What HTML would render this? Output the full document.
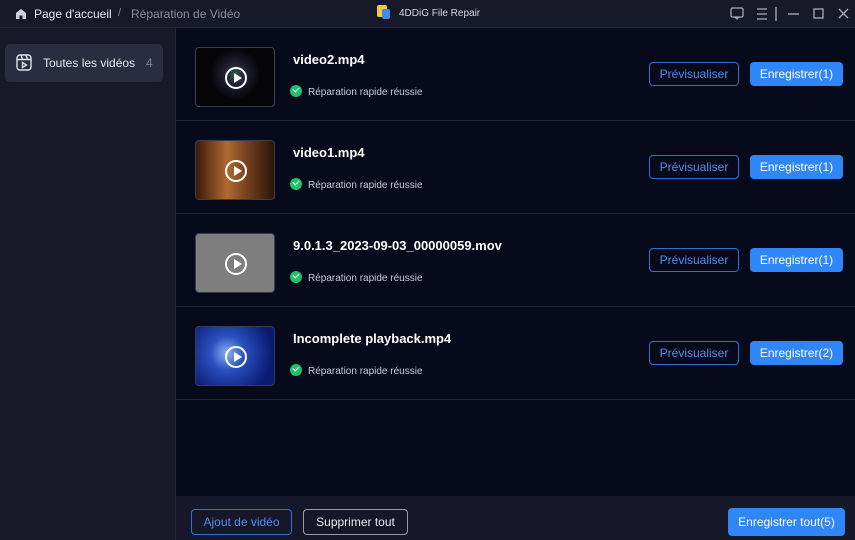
<!DOCTYPE html>
<html><head><meta charset="utf-8"><style>
*{margin:0;padding:0;box-sizing:border-box}
body{width:855px;height:540px;background:#070a1a;font-family:"Liberation Sans",sans-serif;position:relative;overflow:hidden;color:#fff}
.top{position:absolute;left:0;top:0;width:855px;height:28px;background:#171929;border-bottom:1px solid #23263a}
.side{position:absolute;left:0;top:28px;width:176px;height:512px;background:#171929;border-right:1px solid #20233a}
.item{position:absolute;left:5px;top:16px;width:158px;height:38px;background:#2a2c3f;border-radius:5px}
.row{position:absolute;left:176px;width:679px;height:93px;border-bottom:1px solid #23263a}
.thumb{position:absolute;left:19px;top:19px;width:80px;height:60px;border-radius:4px;border:1px solid #3a3d50;overflow:hidden}
.play{position:absolute;left:29px;top:19px;width:22px;height:22px;border:2px solid #fff;border-radius:50%}
.play:after{content:"";position:absolute;left:7px;top:4px;border-left:8px solid #fff;border-top:5px solid transparent;border-bottom:5px solid transparent}
.name{position:absolute;left:117px;top:24px;font-size:13px;font-weight:bold}
.ok{position:absolute;left:114px;top:57px;font-size:10px;color:#c8cad4}
.ok i{display:inline-block;width:12px;height:12px;border-radius:50%;background:#22c06b;vertical-align:-2px;margin-right:6px;position:relative}
.ok i:after{content:"";position:absolute;left:3px;top:2px;width:5px;height:3px;border-left:1.5px solid #fff;border-bottom:1.5px solid #fff;transform:rotate(-45deg)}
.b1{position:absolute;left:473px;top:34px;width:90px;height:24px;border:1px solid #2f6fd6;border-radius:4px;color:#4d8ff0;font-size:12px;text-align:center;line-height:22px}
.b2{position:absolute;left:574px;top:34px;width:93px;height:24px;background:#2f86f6;border-radius:4px;color:#fff;font-size:12px;text-align:center;line-height:24px}
.foot{position:absolute;left:176px;top:496px;width:679px;height:44px;background:#161829}
</style></head><body>
<div class="top">
<svg style="position:absolute;left:15px;top:8px" width="12" height="12" viewBox="0 0 12 12"><path d="M1 5L6 1L11 5V11H7.5V7.5H4.5V11H1Z" fill="#d0d2da"/></svg>
<span style="position:absolute;left:34px;top:7px;font-size:12px;color:#e8e9ee">Page d'accueil</span>
<span style="position:absolute;left:118px;top:7px;font-size:11px;color:#888">/</span>
<span style="position:absolute;left:131px;top:7px;font-size:12px;color:#8a8d9c">Réparation de Vidéo</span>
<div style="position:absolute;left:377px;top:5px;width:10px;height:12px;background:#f5c542;border-radius:2px"></div>
<div style="position:absolute;left:382px;top:9px;width:8px;height:10px;background:#3b8df5;border-radius:2px"></div>
<span style="position:absolute;left:399px;top:8px;font-size:10px;color:#d8d9e0">4DDiG File Repair</span>
<svg style="position:absolute;left:730px;top:7px" width="120" height="14" viewBox="0 0 120 14" stroke="#a8abb8" fill="none" stroke-width="1.3"><rect x="1" y="1" width="12" height="9" rx="1.5"/><path d="M5 10l2 2 2-2"/><path d="M27 2h10M27 7h10M27 12h10"/><path d="M46 0v14"/><path d="M58 7h11"/><rect x="84" y="2" width="9" height="9"/><path d="M109 2l9 9M118 2l-9 9"/></svg>
</div>
<div class="side"><div class="item">
<svg style="position:absolute;left:11px;top:10px" width="16" height="17" viewBox="0 0 16 17" fill="none" stroke="#e0e2ea" stroke-width="1.4"><rect x="1" y="1" width="14" height="15" rx="3"/><path d="M1 5.5h14M5 1l1.5 4.5M10 1l1.5 4.5"/><path d="M6.5 8.5v5l4-2.5z"/></svg>
<span style="position:absolute;left:38px;top:12px;font-size:12px;color:#e8e9ee">Toutes les vidéos</span>
<span style="position:absolute;left:141px;top:12px;font-size:12px;color:#80838f">4</span></div></div>

<div class="row" style="top:28px"><div class="thumb" style="background:radial-gradient(circle at 50% 45%,#354 0,#223 20%,#050508 50%)"><div class="play"></div></div><div class="name">video2.mp4</div><div class="ok"><i></i>Réparation rapide réussie</div><div class="b1">Prévisualiser</div><div class="b2">Enregistrer(1)</div></div>
<div class="row" style="top:121px"><div class="thumb" style="background:linear-gradient(90deg,#3a1a0a,#b06a30 40%,#6a3a1a 70%,#2a1408)"><div class="play"></div></div><div class="name">video1.mp4</div><div class="ok"><i></i>Réparation rapide réussie</div><div class="b1">Prévisualiser</div><div class="b2">Enregistrer(1)</div></div>
<div class="row" style="top:214px"><div class="thumb" style="background:#7e7e7e"><div class="play"></div></div><div class="name">9.0.1.3_2023-09-03_00000059.mov</div><div class="ok"><i></i>Réparation rapide réussie</div><div class="b1">Prévisualiser</div><div class="b2">Enregistrer(1)</div></div>
<div class="row" style="top:307px"><div class="thumb" style="background:radial-gradient(circle at 40% 45%,#8ab0f0 0,#2a50c0 30%,#0a1a70 80%)"><div class="play"></div></div><div class="name">Incomplete playback.mp4</div><div class="ok"><i></i>Réparation rapide réussie</div><div class="b1">Prévisualiser</div><div class="b2">Enregistrer(2)</div></div>

<div class="foot">
<div style="position:absolute;left:15px;top:13px;width:101px;height:26px;border:1px solid #2f6fd6;border-radius:4px;color:#4d8ff0;font-size:12px;text-align:center;line-height:24px">Ajout de vidéo</div>
<div style="position:absolute;left:127px;top:13px;width:105px;height:26px;border:1px solid #9a9cab;border-radius:4px;color:#e8e9ee;font-size:12px;text-align:center;line-height:24px">Supprimer tout</div>
<div style="position:absolute;left:552px;top:12px;width:117px;height:28px;background:#2f86f6;border-radius:4px;color:#fff;font-size:12px;text-align:center;line-height:28px">Enregistrer tout(5)</div>
</div>
</body></html>
